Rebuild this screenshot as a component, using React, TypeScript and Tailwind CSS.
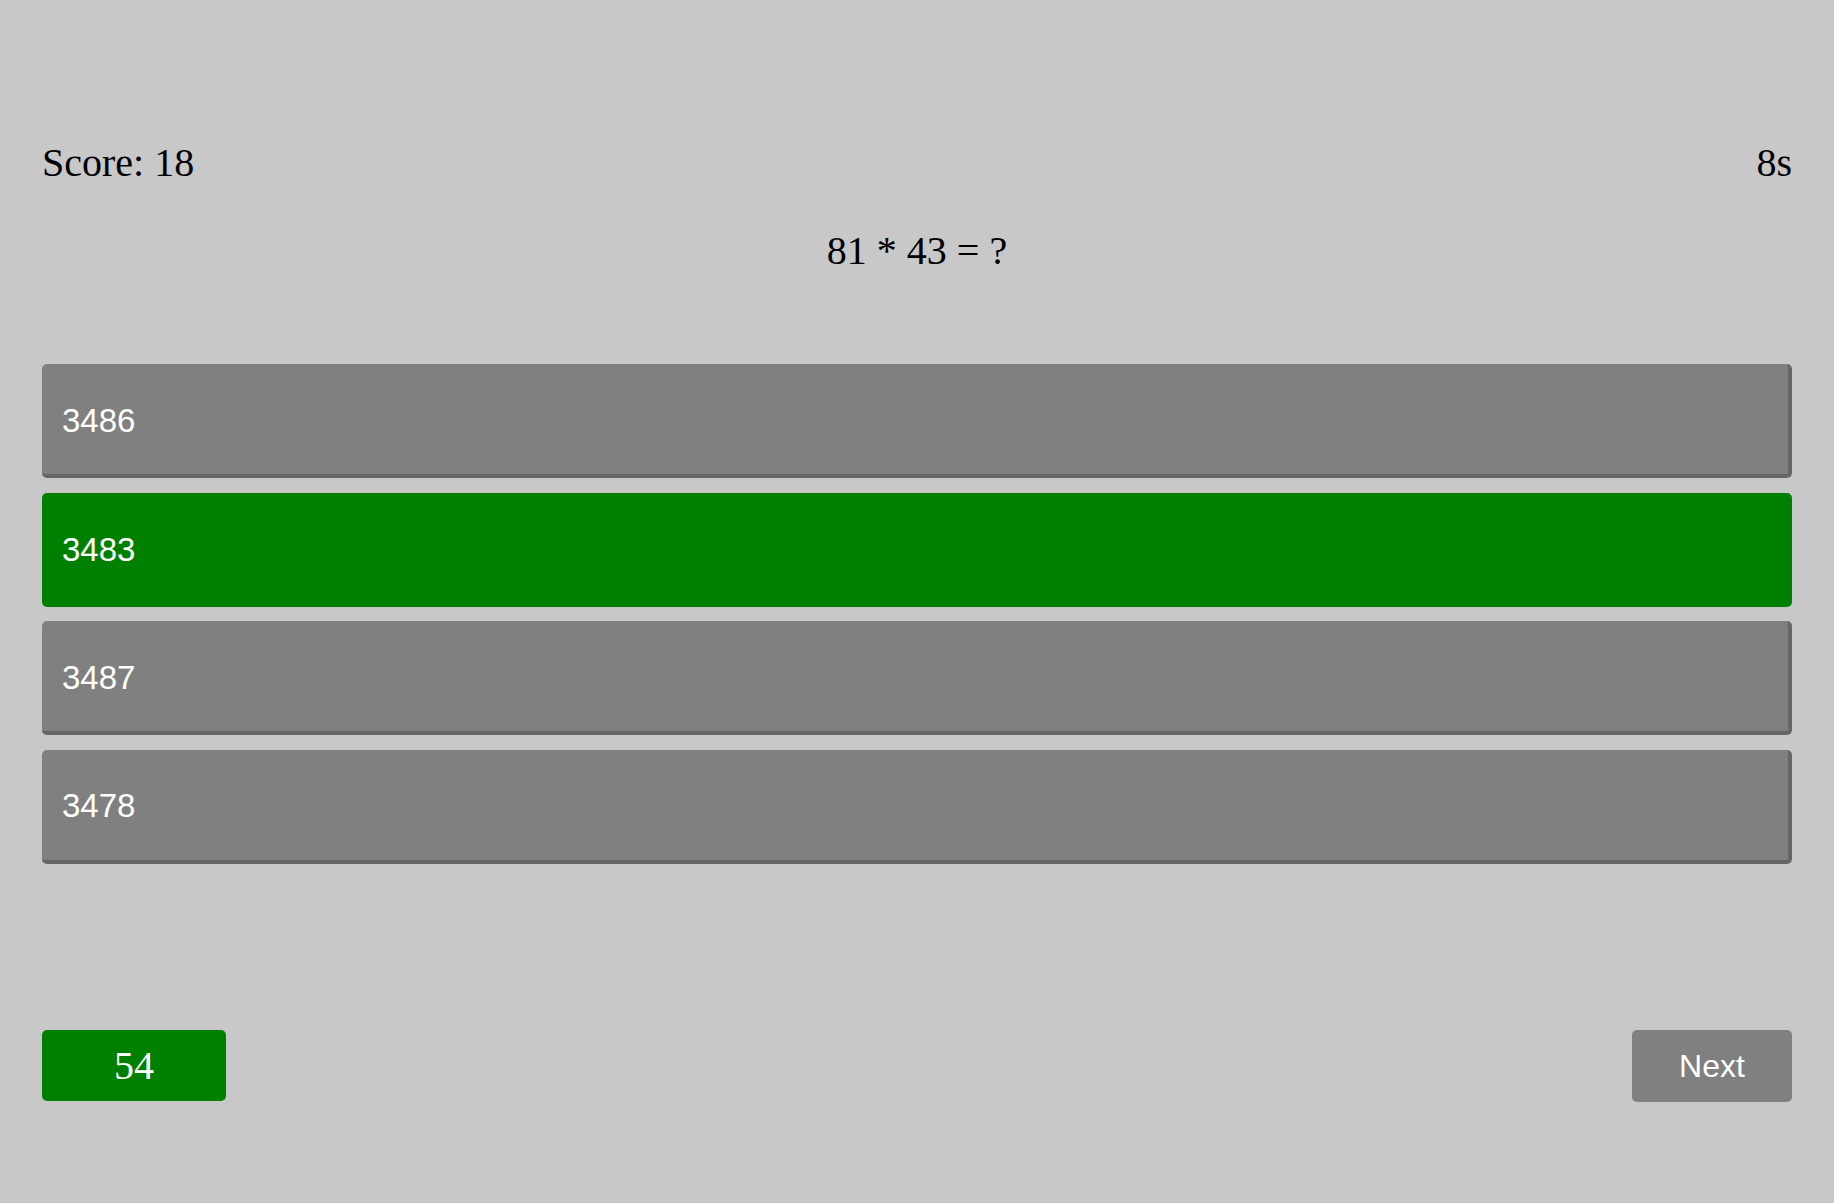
const answers = [
  { value: 3486, correct: false },
  { value: 3483, correct: true },
  { value: 3487, correct: false },
  { value: 3478, correct: false },
];

export default function App() {
  return (
    <div className="min-h-screen bg-[#c8c8c8] px-[42px] pt-[141px] font-['Liberation_Serif','Times_New_Roman',serif] text-black">
      <div className="flex justify-between text-[40px] leading-[44px]">
        <p>Score: 18</p>
        <p>8s</p>
      </div>
      <p className="mt-[44px] text-center text-[40px] leading-[44px]">81 * 43 = ?</p>

      <ul className="mt-[91px] flex flex-col gap-[14.5px] font-['Liberation_Sans',Arial,sans-serif]">
        {answers.map((a) => (
          <li key={a.value}>
            <button
              className={
                a.correct
                  ? "flex h-[114px] w-full items-center rounded-[5px] bg-[#008000] pl-[20px] text-[33px] text-white"
                  : "flex h-[114px] w-full items-center rounded-[5px] border-r-4 border-b-4 border-[#666666] bg-[#808080] pl-[20px] pt-[3px] text-[33px] text-white"
              }
            >
              {a.value}
            </button>
          </li>
        ))}
      </ul>

      <div className="mt-[166px] flex items-center justify-between">
        <div className="flex h-[71px] w-[184px] items-center justify-center rounded-[5px] bg-[#008000] text-[40px] text-white">
          54
        </div>
        <button className="h-[72px] w-[160px] rounded-[5px] bg-[#808080] font-['Liberation_Sans',Arial,sans-serif] text-[32px] text-white">
          Next
        </button>
      </div>
    </div>
  );
}
